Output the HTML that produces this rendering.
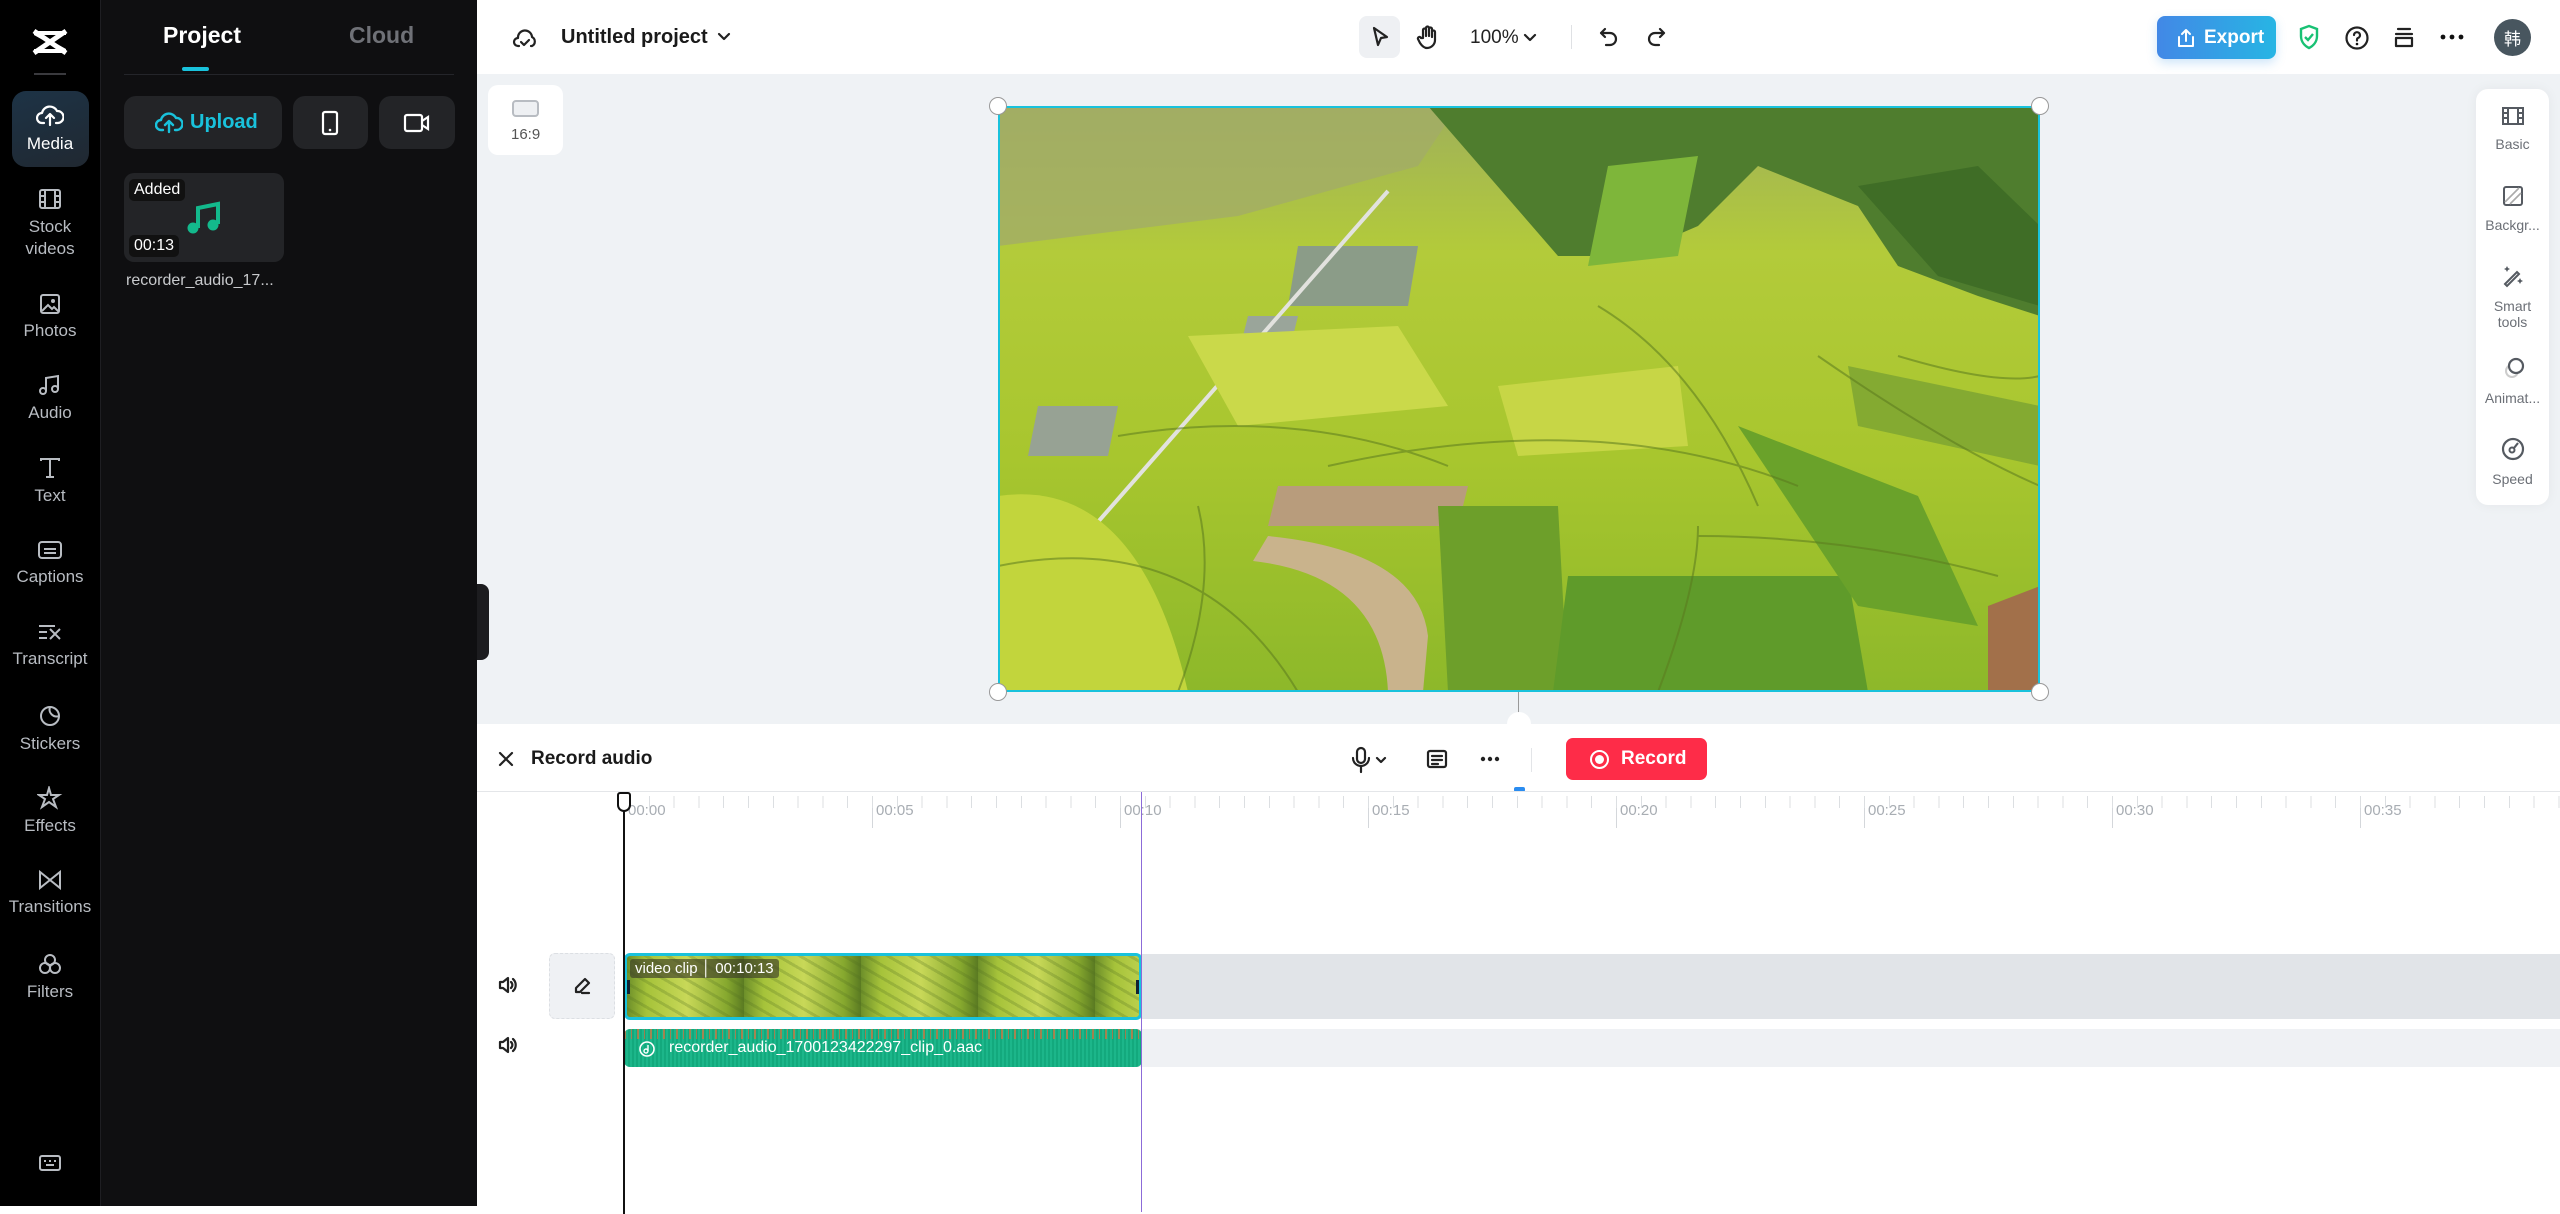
<!DOCTYPE html>
<html><head><meta charset="utf-8"><style>
*{box-sizing:border-box;margin:0;padding:0}
body{width:2560px;height:1206px;overflow:hidden;font-family:"Liberation Sans","Noto Sans CJK SC",sans-serif;background:#fff;position:relative}
.abs{position:absolute}
.nav{left:0;top:0;width:100px;height:1206px;background:#000}
.navi{position:absolute;left:0;width:100px;text-align:center;color:#b8bcc2;font-size:17px}
.navi svg{display:block;margin:0 auto 6px}
.panel{left:100px;top:0;width:377px;height:1206px;background:#0f0f11;border-left:1px solid #1e1e22}
.btn{position:absolute;background:#232427;border-radius:12px}
.top{left:477px;top:0;width:2083px;height:74px;background:#fff}
.canvas{left:477px;top:74px;width:2083px;height:650px;background:#eff2f5}
.tl{left:477px;top:724px;width:2083px;height:482px;background:#fff}
.ico{stroke:#222;fill:none;stroke-width:2.2;stroke-linecap:round;stroke-linejoin:round}
.rp{position:absolute;left:0;width:73px;text-align:center;color:#6b6f76;font-size:14px;line-height:16px}
.rp svg{display:block;margin:0 auto 10px}
.lab{position:absolute;top:10px;font-size:15px;color:#a8adb3}
.major{position:absolute;top:6px;width:1px;height:30px;background:#d4d7db}
</style></head><body>

<!-- left nav -->
<div class="abs nav">
  <svg class="abs" style="left:31px;top:27px" width="38" height="30" viewBox="0 0 38 30"><path d="M3 4 L35 4 L35 8 L10 8 L35 22 L35 26 L3 26 L3 22 L28 22 L3 8 Z" fill="#fff"/><path d="M3 4 L35 26 M35 4 L3 26" stroke="#fff" stroke-width="5"/></svg>
  <div class="abs" style="left:34px;top:73px;width:32px;height:2px;background:#3a3a3e"></div>
  <div class="abs" style="left:12px;top:91px;width:77px;height:76px;border-radius:14px;background:linear-gradient(160deg,#1d3346,#202831)"></div>
  <div class="navi" style="top:104px;color:#fff;font-size:17px"><svg width="28" height="24" viewBox="0 0 28 24"><path d="M8 19 H6 a5 5 0 0 1 0-10 a8 8 0 0 1 15-2 a6 6 0 0 1 1 12 h-2 M14 21 V11 M10 14 l4-4 4 4" fill="none" stroke="#fff" stroke-width="2.2" stroke-linecap="round" stroke-linejoin="round"/></svg>Media</div>
  <div class="navi" style="top:188px;line-height:22px"><svg width="24" height="22" viewBox="0 0 24 22"><rect x="2" y="2" width="20" height="18" rx="2" fill="none" stroke="#b8bcc2" stroke-width="2"/><path d="M7 2v18M17 2v18M2 8h5M2 14h5M17 8h5M17 14h5" stroke="#b8bcc2" stroke-width="2"/></svg>Stock<br>videos</div>
  <div class="navi" style="top:293px"><svg width="22" height="22" viewBox="0 0 22 22"><rect x="2" y="2" width="18" height="18" rx="2" fill="none" stroke="#b8bcc2" stroke-width="2"/><path d="M3 18 l6-6 4 4 2-2 5 5" fill="none" stroke="#b8bcc2" stroke-width="2"/><circle cx="14" cy="8" r="2" fill="#b8bcc2"/></svg>Photos</div>
  <div class="navi" style="top:373px"><svg width="24" height="24" viewBox="0 0 24 24"><path d="M8 18V5l12-2v13" fill="none" stroke="#b8bcc2" stroke-width="2"/><circle cx="5" cy="18" r="3" fill="none" stroke="#b8bcc2" stroke-width="2"/><circle cx="17" cy="16" r="3" fill="none" stroke="#b8bcc2" stroke-width="2"/></svg>Audio</div>
  <div class="navi" style="top:456px"><svg width="24" height="24" viewBox="0 0 24 24"><path d="M3 5V3h18v2M12 3v18M8 21h8" fill="none" stroke="#b8bcc2" stroke-width="2"/></svg>Text</div>
  <div class="navi" style="top:539px"><svg width="26" height="22" viewBox="0 0 26 22"><rect x="2" y="3" width="22" height="16" rx="3" fill="none" stroke="#b8bcc2" stroke-width="2"/><path d="M7 10h12M7 14h12" stroke="#b8bcc2" stroke-width="2"/></svg>Captions</div>
  <div class="navi" style="top:621px"><svg width="26" height="22" viewBox="0 0 26 22"><path d="M2 5h16M2 11h8M2 17h8M13 8l10 10M23 8L13 18" fill="none" stroke="#b8bcc2" stroke-width="2"/></svg>Transcript</div>
  <div class="navi" style="top:704px"><svg width="24" height="24" viewBox="0 0 24 24"><path d="M21 12a9 9 0 1 1-9-9 9 9 0 0 1 9 9 M21 12 a7 7 0 0 1-9-9" fill="none" stroke="#b8bcc2" stroke-width="2"/></svg>Stickers</div>
  <div class="navi" style="top:786px"><svg width="26" height="24" viewBox="0 0 26 24"><path d="M12 2l2 7h8l-6 4 3 8-7-5-7 5 3-8-6-4h8z" fill="none" stroke="#b8bcc2" stroke-width="2"/></svg>Effects</div>
  <div class="navi" style="top:869px"><svg width="24" height="22" viewBox="0 0 24 22"><path d="M2 3v16l10-8zM22 3v16l-10-8z" fill="none" stroke="#b8bcc2" stroke-width="2"/></svg>Transitions</div>
  <div class="navi" style="top:952px"><svg width="26" height="24" viewBox="0 0 26 24"><circle cx="13" cy="8" r="5" fill="none" stroke="#b8bcc2" stroke-width="2"/><circle cx="8" cy="16" r="5" fill="none" stroke="#b8bcc2" stroke-width="2"/><circle cx="18" cy="16" r="5" fill="none" stroke="#b8bcc2" stroke-width="2"/></svg>Filters</div>
  <svg class="abs" style="left:38px;top:1153px" width="24" height="20" viewBox="0 0 24 20"><rect x="2" y="3" width="20" height="14" rx="2" fill="none" stroke="#b8bcc2" stroke-width="2"/><path d="M6 8h2M11 8h2M16 8h2M8 12h8" stroke="#b8bcc2" stroke-width="2"/></svg>
</div>

<!-- panel -->
<div class="abs panel">
  <div class="abs" style="left:62px;top:22px;font-size:23px;font-weight:bold;color:#fff">Project</div>
  <div class="abs" style="left:248px;top:22px;font-size:23px;font-weight:bold;color:#6f7177">Cloud</div>
  <div class="abs" style="left:81px;top:67px;width:27px;height:4px;border-radius:2px;background:#19c2dc"></div>
  <div class="abs" style="left:23px;top:74px;width:330px;height:1px;background:#24252a"></div>
  <div class="btn" style="left:23px;top:96px;width:158px;height:53px"><svg class="abs" style="left:31px;top:14px" width="28" height="24" viewBox="0 0 28 24"><path d="M8 20H6a5 5 0 0 1 0-10a8 8 0 0 1 15-2a6 6 0 0 1 1 12h-2M14 22V12M10 15l4-4 4 4" fill="none" stroke="#19c2dc" stroke-width="2.4" stroke-linecap="round" stroke-linejoin="round"/></svg><span class="abs" style="left:66px;top:15px;font-size:20px;font-weight:bold;color:#19c2dc">Upload</span></div>
  <div class="btn" style="left:192px;top:96px;width:75px;height:53px"><svg class="abs" style="left:28px;top:14px" width="18" height="26" viewBox="0 0 18 26"><rect x="2" y="2" width="14" height="22" rx="2" fill="none" stroke="#fff" stroke-width="2.2"/><circle cx="9" cy="20" r="1.3" fill="#fff"/></svg></div>
  <div class="btn" style="left:278px;top:96px;width:76px;height:53px"><svg class="abs" style="left:24px;top:16px" width="28" height="22" viewBox="0 0 28 22"><rect x="2" y="3" width="17" height="16" rx="2" fill="none" stroke="#fff" stroke-width="2.2"/><path d="M19 9l6-4v12l-6-4" fill="none" stroke="#fff" stroke-width="2.2"/></svg></div>
  <div class="btn" style="left:23px;top:173px;width:160px;height:89px;border-radius:10px">
    <div class="abs" style="left:5px;top:6px;background:#111;border-radius:5px;padding:2px 5px;color:#fff;font-size:16px">Added</div>
    <div class="abs" style="left:5px;top:62px;background:#111;border-radius:5px;padding:2px 5px;color:#fff;font-size:16px">00:13</div>
    <svg class="abs" style="left:62px;top:27px" width="36" height="36" viewBox="0 0 36 36"><path d="M12 28V8l20-4v20" fill="none" stroke="#13b98c" stroke-width="4"/><circle cx="7" cy="28" r="5.5" fill="#13b98c"/><circle cx="27" cy="25" r="5.5" fill="#13b98c"/></svg>
  </div>
  <div class="abs" style="left:25px;top:272px;font-size:16px;color:#c8cacd">recorder_audio_17...</div>
</div>

<!-- top bar -->
<div class="abs top">
  <svg class="abs" style="left:35px;top:25px" width="26" height="26" viewBox="0 0 26 26"><path d="M7 21H6a4 4 0 0 1 0-8 7 7 0 0 1 14-1 5 5 0 0 1 0 9h-1" class="ico"/><path d="M9 17l3 3 5-5" class="ico"/></svg>
  <div class="abs" style="left:84px;top:26px;font-size:20px;font-weight:bold;color:#1a1a1a">Untitled project</div>
  <svg class="abs" style="left:240px;top:32px" width="14" height="10" viewBox="0 0 14 10"><path d="M2 2l5 5 5-5" class="ico" stroke-width="2"/></svg>
  <div class="abs" style="left:882px;top:16px;width:41px;height:42px;border-radius:8px;background:#eef0f3"></div>
  <svg class="abs" style="left:892px;top:25px" width="22" height="24" viewBox="0 0 22 24"><path d="M5 3l13 9-6 1-3 7z" class="ico"/></svg>
  <svg class="abs" style="left:939px;top:24px" width="24" height="26" viewBox="0 0 24 26"><path d="M7 14V6a1.5 1.5 0 0 1 3 0v6V4a1.5 1.5 0 0 1 3 0v8V5a1.5 1.5 0 0 1 3 0v8V8a1.5 1.5 0 0 1 3 0v8a8 8 0 0 1-8 8c-3 0-5-2-7-5l-2-4a1.5 1.5 0 0 1 3-1z" class="ico" stroke-width="1.8"/></svg>
  <div class="abs" style="left:993px;top:27px;font-size:19px;color:#222">100%</div>
  <svg class="abs" style="left:1046px;top:33px" width="14" height="10" viewBox="0 0 14 10"><path d="M2 2l5 5 5-5" class="ico" stroke-width="1.6"/></svg>
  <div class="abs" style="left:1094px;top:25px;width:1px;height:24px;background:#dfe1e4"></div>
  <svg class="abs" style="left:1121px;top:25px" width="22" height="24" viewBox="0 0 22 24"><path d="M7 4L3 8l4 4M3 8h9a6 6 0 0 1 0 12H8" class="ico"/></svg>
  <svg class="abs" style="left:1168px;top:25px" width="22" height="24" viewBox="0 0 22 24"><path d="M15 4l4 4-4 4M19 8h-9a6 6 0 0 0 0 12h4" class="ico" stroke="#cfd3d8"/></svg>
  <div class="abs" style="left:1680px;top:16px;width:119px;height:43px;border-radius:8px;background:linear-gradient(90deg,#4288e6,#27b5e4);box-shadow:0 4px 10px rgba(60,150,230,.25)"></div>
  <svg class="abs" style="left:1699px;top:28px" width="20" height="20" viewBox="0 0 20 20"><path d="M10 13V2M6 6l4-4 4 4M3 9v9h14V9" fill="none" stroke="#fff" stroke-width="2" stroke-linecap="round" stroke-linejoin="round"/></svg>
  <div class="abs" style="left:1727px;top:27px;font-size:19px;font-weight:bold;color:#fff">Export</div>
  <svg class="abs" style="left:1821px;top:24px" width="22" height="26" viewBox="0 0 22 26"><path d="M11 2l8 3v7c0 6-4 10-8 12-4-2-8-6-8-12V5z" fill="none" stroke="#19c174" stroke-width="2.4"/><path d="M7 13l3 3 5-6" fill="none" stroke="#19c174" stroke-width="2.4"/></svg>
  <svg class="abs" style="left:1867px;top:25px" width="26" height="26" viewBox="0 0 26 26"><circle cx="13" cy="13" r="10.5" class="ico" stroke="#111" stroke-width="2.4"/><path d="M10 10a3 3 0 1 1 4 3c-1 .5-1 1-1 2.5" class="ico" stroke="#111" stroke-width="2.4"/><circle cx="13" cy="19" r="1.3" fill="#111"/></svg>
  <svg class="abs" style="left:1916px;top:26px" width="22" height="22" viewBox="0 0 22 22"><path d="M5 3h12M3 8h16M3 12h16v8H3z" class="ico" stroke="#111" stroke-width="2.4"/></svg>
  <svg class="abs" style="left:1963px;top:33px" width="24" height="8" viewBox="0 0 24 8"><circle cx="3" cy="4" r="2.4" fill="#111"/><circle cx="12" cy="4" r="2.4" fill="#111"/><circle cx="21" cy="4" r="2.4" fill="#111"/></svg>
  <div class="abs" style="left:2017px;top:19px;width:37px;height:37px;border-radius:50%;background:#48565f;color:#fff;font-size:17px;text-align:center;line-height:37px;font-family:'Noto Sans CJK SC',sans-serif">韩</div>
</div>

<!-- canvas -->
<div class="abs canvas">
  <div class="abs" style="left:11px;top:11px;width:75px;height:70px;border-radius:10px;background:#fff"></div>
  <div class="abs" style="left:35px;top:26px;width:27px;height:17px;border:2px solid #b8bcc2;border-radius:4px;background:#eef0f3"></div>
  <div class="abs" style="left:34px;top:52px;font-size:15px;color:#555">16:9</div>
  <div class="abs" style="left:0;top:510px;width:12px;height:76px;border-radius:0 8px 8px 0;background:#1c1c1f"></div>

  <svg class="abs" style="left:521px;top:32px" width="1042" height="586" viewBox="0 0 1042 586" preserveAspectRatio="none">
    <defs><linearGradient id="g1" x1="0" y1="0" x2="0" y2="1"><stop offset="0" stop-color="#9fb05a"/><stop offset=".25" stop-color="#b3cb3a"/><stop offset=".6" stop-color="#a8c62e"/><stop offset="1" stop-color="#8db82a"/></linearGradient></defs>
    <rect width="1042" height="586" fill="url(#g1)"/>
    <path d="M0 0H460L420 60 240 110 0 140z" fill="#a3ad66" opacity=".8"/>
    <path d="M430 0H1042V210L980 190 900 160 860 100 760 60 700 120 630 150 560 150z" fill="#4f7d2e"/>
    <path d="M860 80 L980 60 L1042 120 V200 L940 170z" fill="#3f6d26"/>
    <path d="M610 60 L700 50 L680 150 L590 160z" fill="#7eb63a"/>
    <path d="M300 140 L420 140 L410 200 L290 200z" fill="#8b9c88"/>
    <path d="M40 300 L120 300 L110 350 L30 350z" fill="#97a294"/>
    <path d="M250 210 L300 210 L290 250 L240 250z" fill="#9aa59a"/>
    <path d="M390 85 L0 530" stroke="#e2e2de" stroke-width="4"/>
    <path d="M280 380 H470 L460 420 H270z" fill="#b89c7c"/>
    <path d="M270 430 Q420 445 430 530 L425 586 H390 Q385 470 255 455z" fill="#c9b38c"/>
    <path d="M0 390 Q140 370 190 586 H0z" fill="#c2d53c"/>
    <path d="M440 400 L560 400 L570 586 L450 586z" fill="#6d9f2a"/>
    <path d="M570 470 L850 470 L870 586 L555 586z" fill="#5f9b2a"/>
    <path d="M740 320 L920 390 L980 520 L860 500z" fill="#6aa22a"/>
    <path d="M190 230 L400 220 L450 300 L240 320z" fill="#cad94a"/>
    <path d="M500 280 L680 260 L690 340 L520 350z" fill="#c7d646"/>
    <path d="M850 260 L1042 300 V360 L860 320z" fill="#7aa232" opacity=".8"/>
    <path d="M990 500 L1042 480 V586 H990z" fill="#a2704a"/>
    <g fill="none" stroke="#5b7a1e" stroke-width="2" opacity=".55">
      <path d="M0 460 Q200 420 300 586"/><path d="M120 330 Q300 300 450 360"/><path d="M330 360 Q600 300 800 380"/>
      <path d="M600 200 Q700 260 760 400"/><path d="M820 250 Q950 340 1042 380"/><path d="M700 430 Q850 430 1000 470"/>
      <path d="M180 586 Q220 480 200 400"/><path d="M660 586 Q700 480 700 420"/><path d="M900 250 Q1000 280 1042 270"/>
    </g>
  </svg>
  <div class="abs" style="left:521px;top:32px;width:1042px;height:586px;border:2px solid #19c2dc"></div>
  <div class="abs" style="left:512px;top:23px;width:18px;height:18px;border-radius:50%;background:#fff;border:1.5px solid #999"></div>
  <div class="abs" style="left:1554px;top:23px;width:18px;height:18px;border-radius:50%;background:#fff;border:1.5px solid #999"></div>
  <div class="abs" style="left:512px;top:609px;width:18px;height:18px;border-radius:50%;background:#fff;border:1.5px solid #999"></div>
  <div class="abs" style="left:1554px;top:609px;width:18px;height:18px;border-radius:50%;background:#fff;border:1.5px solid #999"></div>
  <div class="abs" style="left:1041px;top:618px;width:1px;height:22px;background:#999"></div>
  <div class="abs" style="left:1030px;top:638px;width:24px;height:24px;border-radius:50%;background:#fff"></div>

  <!-- right panel -->
  <div class="abs" style="left:1999px;top:15px;width:73px;height:416px;border-radius:12px;background:#fff;box-shadow:0 0 12px rgba(0,0,0,.05)">
    <div class="rp" style="top:17px"><svg width="24" height="20" viewBox="0 0 24 20"><rect x="2" y="2" width="20" height="16" fill="none" stroke="#555a61" stroke-width="2"/><path d="M7 2v16M17 2v16M2 7h5M2 12h5M17 7h5M17 12h5" stroke="#555a61" stroke-width="2"/></svg>Basic</div>
    <div class="rp" style="top:96px"><svg width="22" height="22" viewBox="0 0 22 22"><rect x="2" y="2" width="18" height="18" rx="2" fill="none" stroke="#555a61" stroke-width="2"/><path d="M3 17L17 3M8 19L19 8" stroke="#aaa" stroke-width="1.6"/></svg>Backgr...</div>
    <div class="rp" style="top:175px"><svg width="24" height="24" viewBox="0 0 24 24"><path d="M4 20L16 8l2 2L6 22z" fill="none" stroke="#555a61" stroke-width="2"/><path d="M6 2l1 2 2 1-2 1-1 2-1-2-2-1 2-1zM19 14l1 2 2 1-2 1-1 2-1-2-2-1 2-1z" fill="#555a61"/></svg>Smart<br>tools</div>
    <div class="rp" style="top:267px"><svg width="24" height="24" viewBox="0 0 24 24"><circle cx="11" cy="15" r="6" fill="none" stroke="#ccc" stroke-width="2"/><circle cx="15" cy="10" r="7" fill="#fff" stroke="#555a61" stroke-width="2.2"/></svg>Animat...</div>
    <div class="rp" style="top:348px"><svg width="24" height="24" viewBox="0 0 24 24"><circle cx="12" cy="12" r="10" fill="none" stroke="#555a61" stroke-width="2.2"/><circle cx="11" cy="13" r="2.5" fill="none" stroke="#555a61" stroke-width="2"/><path d="M13 11l4-5" stroke="#555a61" stroke-width="2.2"/></svg>Speed</div>
  </div>
</div>

<!-- timeline -->
<div class="abs tl">
  <svg class="abs" style="left:20px;top:26px" width="18" height="18" viewBox="0 0 18 18"><path d="M3 3l12 12M15 3L3 15" class="ico" stroke-width="2"/></svg>
  <div class="abs" style="left:54px;top:24px;font-size:19px;font-weight:bold;color:#1a1a1a">Record audio</div>
  <svg class="abs" style="left:874px;top:22px" width="20" height="28" viewBox="0 0 20 28"><rect x="6" y="2" width="8" height="15" rx="4" class="ico"/><path d="M2 12a8 8 0 0 0 16 0M10 20v6" class="ico"/></svg>
  <svg class="abs" style="left:898px;top:32px" width="12" height="8" viewBox="0 0 12 8"><path d="M2 2l4 4 4-4" class="ico" stroke="#999" stroke-width="1.5"/></svg>
  <svg class="abs" style="left:949px;top:24px" width="22" height="22" viewBox="0 0 22 22"><rect x="2" y="3" width="18" height="16" rx="2" class="ico"/><path d="M6 8h10M6 12h10M6 16h6" class="ico" stroke-width="1.8"/></svg>
  <svg class="abs" style="left:1003px;top:32px" width="20" height="6" viewBox="0 0 20 6"><circle cx="3" cy="3" r="2.2" fill="#222"/><circle cx="10" cy="3" r="2.2" fill="#222"/><circle cx="17" cy="3" r="2.2" fill="#222"/></svg>
  <div class="abs" style="left:1054px;top:24px;width:1px;height:24px;background:#e3e5e8"></div>
  <div class="abs" style="left:1089px;top:14px;width:141px;height:42px;border-radius:7px;background:#fe2c48"></div>
  <div class="abs" style="left:1113px;top:26px;width:19px;height:19px;border-radius:50%;border:2.5px solid #fff"></div>
  <div class="abs" style="left:1118px;top:31px;width:9px;height:9px;border-radius:50%;background:#fff"></div>
  <div class="abs" style="left:1144px;top:24px;font-size:19px;font-weight:bold;color:#fff">Record</div>
  <div class="abs" style="left:1037px;top:63px;width:11px;height:5px;border-radius:2px;background:#2a8cf0"></div>
  <div class="abs" style="left:0;top:67px;width:2083px;height:1px;background:#e4e6e9"></div>

  <!-- ruler -->
  <div class="abs" style="left:0;top:68px;width:2083px;height:60px">
    <div class="major" style="left:147px"></div><div class="lab" style="left:151px">00:00</div>
    <div class="major" style="left:395px"></div><div class="lab" style="left:399px">00:05</div>
    <div class="major" style="left:643px"></div><div class="lab" style="left:647px">00:10</div>
    <div class="major" style="left:891px"></div><div class="lab" style="left:895px">00:15</div>
    <div class="major" style="left:1139px"></div><div class="lab" style="left:1143px">00:20</div>
    <div class="major" style="left:1387px"></div><div class="lab" style="left:1391px">00:25</div>
    <div class="major" style="left:1635px"></div><div class="lab" style="left:1639px">00:30</div>
    <div class="major" style="left:1883px"></div><div class="lab" style="left:1887px">00:35</div>
    <div class="abs" style="left:147px;top:4px;width:1936px;height:12px;background:repeating-linear-gradient(90deg,#dcdfe2 0 1px,transparent 1px 24.8px)"></div>
  </div>

  <!-- tracks -->
  <div class="abs" style="left:222px;top:230px;width:1861px;height:65px;background:#e1e4e8"></div>
  <div class="abs" style="left:222px;top:305px;width:1861px;height:38px;background:#eff1f4"></div>
  <svg class="abs" style="left:21px;top:251px" width="20" height="20" viewBox="0 0 20 20"><path d="M2 7h3l5-4v14l-5-4H2z M13 7a4 4 0 0 1 0 6M15 4a8 8 0 0 1 0 12" class="ico" stroke-width="1.6"/></svg>
  <svg class="abs" style="left:21px;top:311px" width="20" height="20" viewBox="0 0 20 20"><path d="M2 7h3l5-4v14l-5-4H2z M13 7a4 4 0 0 1 0 6M15 4a8 8 0 0 1 0 12" class="ico" stroke-width="1.6"/></svg>
  <div class="abs" style="left:72px;top:229px;width:66px;height:66px;border-radius:6px;background:#eff1f4;border:1px dashed #dcdfe3"></div>
  <svg class="abs" style="left:95px;top:252px" width="20" height="20" viewBox="0 0 20 20"><path d="M13 3l4 4-9 9H4v-4zM10 17h7" class="ico" stroke-width="1.6"/></svg>

  <div class="abs" style="left:147px;top:229px;width:518px;height:67px;border-radius:6px;border:3px solid #19c2dc;background:repeating-linear-gradient(90deg,#6d8f2a 0,#a6c33a 20px,#c8d858 60px,#86a82e 100px,#5a7a22 117px);overflow:hidden">
    <div class="abs" style="left:0;top:0;width:518px;height:67px;background:repeating-linear-gradient(30deg,rgba(80,110,30,.25) 0 3px,transparent 3px 11px)"></div>
    <div class="abs" style="left:3px;top:3px;background:rgba(60,60,40,.65);color:#fff;font-size:15px;padding:1px 5px;border-radius:3px">video clip │ 00:10:13</div>
    <div class="abs" style="left:0;top:24px;width:3px;height:14px;background:#123"></div>
    <div class="abs" style="right:0;top:24px;width:3px;height:14px;background:#123"></div>
  </div>
  <div class="abs" style="left:147px;top:305px;width:518px;height:38px;border-radius:6px;background:repeating-linear-gradient(90deg,#13a97d 0 2px,#1cb68a 2px 4px);overflow:hidden">
    <div class="abs" style="left:0;top:0;width:518px;height:10px;background:repeating-linear-gradient(90deg,#e0703a 0 2px,transparent 2px 7px,#d86a3a 7px 8px,transparent 8px 13px);opacity:.7"></div>
    <svg class="abs" style="left:14px;top:11px" width="18" height="18" viewBox="0 0 18 18"><circle cx="9" cy="9" r="7" fill="none" stroke="#fff" stroke-width="1.6"/><circle cx="8" cy="11" r="2" fill="none" stroke="#fff" stroke-width="1.4"/><path d="M10 11V5" stroke="#fff" stroke-width="1.4"/></svg>
    <div class="abs" style="left:45px;top:10px;color:#fff;font-size:16px">recorder_audio_1700123422297_clip_0.aac</div>
  </div>

  <!-- playhead & end line -->
  <div class="abs" style="left:146px;top:70px;width:2px;height:420px;background:#111"></div>
  <div class="abs" style="left:140px;top:68px;width:14px;height:20px;border:2px solid #111;border-radius:3px 3px 7px 7px;background:#fff"></div>
  <div class="abs" style="left:664px;top:68px;width:1px;height:420px;background:#8c6bd8"></div>
</div>
</body></html>
